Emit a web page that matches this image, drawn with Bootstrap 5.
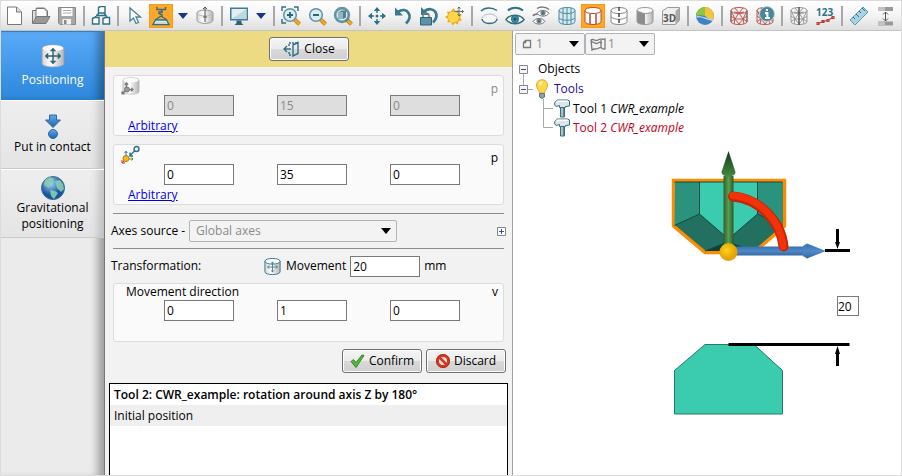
<!DOCTYPE html>
<html lang="en">
<head>
<meta charset="utf-8">
<meta name="viewport" content="width=device-width, initial-scale=1">
<title>Positioning</title>
<link href="https://cdn.jsdelivr.net/npm/bootstrap@5.3.0/dist/css/bootstrap.min.css" rel="stylesheet">
<style>
body{font:12px/18px "Open Sans","Noto Sans",sans-serif;color:#000;background:#fff}
.app{min-height:100vh;border:1px solid #dcdcdc}
svg{display:block;flex:none}
button{font:inherit;color:#000}
.toolbar{height:30px;padding-left:1px;background:linear-gradient(#fff,#f4f4f4 50%,#dedede);border-bottom:1px solid #c4c4c4;overflow:hidden}
.tool{width:24px;height:24px;margin:0 1px;padding:2px;border:0;background:none;flex:none}
.tool.active{background:#ffa726;box-shadow:inset 0 0 0 1px #f59a1b}
.divider{width:2px;height:20px;margin:0 3px;background:#a8a8a8;flex:none}
.drop{width:18px;height:24px;padding:0 4px;border:0;background:none;flex:none}
.t{fill:none;stroke:#2d7087;stroke-width:1.4}
.g{fill:none;stroke:#7a7a7a;stroke-width:1.3}
.r{fill:none;stroke:#bd3b30;stroke-width:1.1}
.sidebar{width:104px;flex:none;background:#ebebeb;border-right:1px solid #767676;box-shadow:inset -11px 0 9px -5px #00000055}
.side-tab{height:69px;border:0;border-bottom:1px solid #c9c9c9;border-top:1px solid #fff;background:linear-gradient(#f1f1f180,#dedede80);line-height:16px}
.side-tab.active{background:linear-gradient(#5aaaf7,#2c87db);color:#fff;border-color:#2f7fc8;box-shadow:inset -11px 0 9px -5px #00000055}
.work{width:408px;flex:none;background:#f2f2f2;border-right:1px solid #a0a0a0}
.banner{height:36px;background:#ecdb83}
.btn-win{width:80px;height:24px;gap:4px;border:1px solid #707070;border-radius:3px;background:linear-gradient(#f4f4f4,#ebebeb 50%,#dadada 50%,#cfcfcf);box-shadow:inset 0 0 0 1px #fcfcfc;padding:0}
.group{background:#fafafa;border:1px solid #dcdcdc;border-radius:3px;padding:0 5px 0 7px}
.group-head{height:19px}
.group-title{line-height:16px;padding-left:5px}
.fields{gap:43px;padding-left:43px}
.num{width:70px;height:21px;border:1px solid #7a7a7a;border-radius:0;padding:0 2px;background:#fff;color:#000;font:inherit}
.num:disabled{background:#dedede;color:#8a8a8a}
.muted{color:#8a8a8a}
.ref-link{color:#00e;padding-left:7px;line-height:19px}
.rule{height:1px;background:#8c8c8c}
.line-row{height:34px;margin:0 -2px}
.movement-row{display:grid;grid-template-columns:152px auto}
.actions{padding:7px 6px 0}
.pick{height:22px;border:1px solid #b0b4b8;border-radius:2px;background:#f3f3f3;padding:0 5px 0 6px}
.pick select{appearance:none;border:0;background:none;font:inherit;color:#8a8a8a;padding:0;min-width:0;outline:0;opacity:1}
.pick-axes{width:208px}
.pick-small{width:70px}
.picks{padding:2px 2px 0}
.log{border:1px solid #000;border-bottom:0;background:#fff;margin:10px 4px 0}
.log div{height:21px;line-height:21px;padding-left:4px}
.log .current{font-weight:600}
.log .alt{background:#efefef}
.tree-node{gap:3px}
.node-group{color:#1a0aa8}
.node-selected{color:#c8001a}
.scene{margin:8px 0 0 147px;width:240px}
.dim{position:absolute;left:177px;top:151px;width:22px;height:20px;padding:0}
</style>
</head>
<body>
<svg width="0" height="0" class="position-absolute" aria-hidden="true">
<defs>
<linearGradient id="metal"><stop offset="0" stop-color="#d5d5d5"/><stop offset=".4" stop-color="#fff"/><stop offset="1" stop-color="#b5b5b5"/></linearGradient>
<linearGradient id="arrowBlue" x2="0" y2="1"><stop offset="0" stop-color="#65a9e6"/><stop offset="1" stop-color="#1f62ad"/></linearGradient>
<linearGradient id="greenRod"><stop offset="0" stop-color="#2f5f2b"/><stop offset=".5" stop-color="#5a9e50"/><stop offset="1" stop-color="#2c5a29"/></linearGradient>
<linearGradient id="greenTip" x2="0" y2="1"><stop offset="0" stop-color="#16361a"/><stop offset="1" stop-color="#468a41"/></linearGradient>
<linearGradient id="blueRod" x2="0" y2="1"><stop offset="0" stop-color="#3b72ae"/><stop offset=".5" stop-color="#4d8ac8"/><stop offset="1" stop-color="#3568a4"/></linearGradient>
<radialGradient id="globe" cx=".4" cy=".3"><stop offset="0" stop-color="#a4d8f5"/><stop offset="1" stop-color="#17549c"/></radialGradient>
<radialGradient id="gold" cx=".4" cy=".4"><stop offset="0" stop-color="#ffd21c"/><stop offset="1" stop-color="#e3a305"/></radialGradient>
<symbol id="can" viewBox="0 0 20 20"><path d="M2 4.500v11c0 4 16 4 16 0v-11z" fill="url(#metal)"/><ellipse cx="10" cy="4.500" rx="8" ry="3" fill="#fafafa"/></symbol>
<symbol id="rim" viewBox="0 0 20 20"><path d="M2 4.500v11c0 4 16 4 16 0v-11M2 4.500c0 4 16 4 16 0s-16-4-16 0"/></symbol>
<symbol id="tub" viewBox="0 0 20 20"><path d="M1 3.500v13c1 3.500 17 3.500 18 0v-13c-1-3.500-17-3.500-18 0z" fill="url(#metal)" stroke="#aaa" stroke-width=".6"/><ellipse cx="10" cy="3.500" rx="8.500" ry="2.500" fill="#fbfbfb"/></symbol>
<symbol id="cross" viewBox="0 0 20 20"><path d="M10 1v18M1 10h18M7 4l3-3 3 3M7 16l3 3 3-3M4 7l-3 3 3 3M16 7l3 3-3 3"/></symbol>
<symbol id="eye" viewBox="0 0 20 12"><path d="M1 6.500C5 .8 15 .8 19 6.500C15 12 5 12 1 6.500z" fill="#fff" stroke-width="1.500"/><circle cx="10" cy="6" r="3.300" fill="#4a9ab4" stroke-width="1.300"/><circle cx="10" cy="6" r="1.300" fill="#123"/></symbol>
<symbol id="hammer" viewBox="0 0 16 19"><path d="M6.500 7.500h4V18h-4z" fill="#b4bfc2" stroke="#2d7087"/><path d="M9.500 8v10" stroke="#6d8188"/><path d="M.7 3.500L3.500 1h10l2 1v5l-4 .5v1h-6v-2L2 7.500.7 6z" fill="#dfe5e6" stroke="#2d7087"/><path d="M2.500 3.300L4 2.300h9.500" stroke="#fff" stroke-width="1.500" fill="none"/></symbol>
<symbol id="axes" viewBox="0 0 12 12"><path d="M5 7V1M5 7h6M5 7l-4 4M3.500 2.500L5 1l1.500 1.500M9.500 5.500L11 7 9.500 8.500M1 8.500V11h2.500" /></symbol>
<symbol id="mesh" viewBox="0 0 20 20"><path d="M2 4.500c0 4 16 4 16 0s-16-4-16 0v11c0 4 16 4 16 0v-11M2 4.500L6 13l4-6 4 6 4-8.500M6 13h8M6 13l-4 2.500M6 13l4 5 4-5 4 2.500M6 13l-1 5M14 13l1 5M6 2l4 5 4-5M2 10l4 3M18 10l-4 3M10 7l-5-1M10 7l5-1"/></symbol>
<symbol id="lens" viewBox="0 0 20 20"><path d="M13.500 13.500l5 4.800" stroke="#b97a10" stroke-width="4"/><path d="M13.500 13.500l5 4.800" stroke="#f5a623" stroke-width="2.600"/><circle cx="9" cy="9" r="6.300" fill="#dcebef" stroke="#5d95a5" stroke-width="1.500"/></symbol>
<symbol id="caret" viewBox="0 0 10 6"><path d="M0 0h10L5 6z"/></symbol>
</defs>
</svg>

<div class="app d-flex flex-column">
<header class="toolbar d-flex align-items-center" role="toolbar" aria-label="Main toolbar">
<button class="tool" aria-label="New"><svg width="20" height="20"><path d="M2.500 1h9l5 5v12.500h-14z" fill="#fff" stroke="#777"/><path d="M11.500 1v5h5" fill="#ddd" stroke="#777"/></svg></button>
<button class="tool" aria-label="Open"><svg width="20" height="20"><path d="M1.500 17V4.500h4V2h8l3 3v6" fill="#ddd" stroke="#777"/><path d="M5 2.500h8l3 3V12H5z" fill="#fff" stroke="#777"/><path d="M1.500 17.500l4-7H19l-4 7z" fill="#999" stroke="#777"/></svg></button>
<button class="tool" aria-label="Save"><svg width="20" height="20"><path d="M1.500 1.500h17v17H3l-1.500-1.500z" fill="#a6a6a6" stroke="#888"/><path d="M4.500 2h11v8h-11z" fill="#fff"/><path d="M6 4.500h8M6 7h8" stroke="#aaa"/><path d="M5.500 13h8.500v5.500H5.500z" fill="#f2f2f2"/><path d="M7 14h2.500v4H7z" fill="#888"/></svg></button>
<span class="divider"></span>
<button class="tool" aria-label="Structure"><svg width="20" height="20" class="t"><path d="M7.500 1.500l2-1h4.500v6.500H7.500zM1.500 12.500l2-1H8v6.500H1.500zM12 12.500l2-1h4.500v6.500H12z" fill="#fff"/><path d="M8 7l-4 4M13 7l3 4M5 9.500h9.500"/></svg></button>
<span class="divider"></span>
<button class="tool" aria-label="Select"><svg width="20" height="20"><path d="M5 2v13l3.500-3 2.500 5.500 2.500-1-2.500-5.500h4.500z" fill="#fff" stroke="#4a8395" stroke-width="1.300"/></svg></button>
<button class="tool active" aria-label="Position tools"><svg width="20" height="20" class="t"><path d="M6 .8v2.700h8.500V1M10.500 3.500v2M12 6H8v1.500l3 1v2"/><path d="M10 10l-6 4M10 10l6 4"/><path d="M4.500 14h11l2.500 4.500H2z" fill="#fff"/><path d="M5 15.500h10l1 2H4z" fill="#bcd9e0" stroke="none"/></svg></button>
<button class="drop" aria-label="Position tools options"><svg width="10" height="6" fill="#16368c"><use href="#caret"/></svg></button>
<button class="tool" aria-label="Part axis"><svg width="20" height="20"><path d="M2 7v7c0 4.500 16 4.500 16 0V7c0-4-16-4-16 0z" fill="url(#metal)" stroke="#999"/><path d="M2 7c0 4 16 4 16 0" fill="none" stroke="#bbb"/><path d="M10 1v15M8 3l2-2 2 2M8 11h4" stroke="#555" fill="none"/></svg></button>
<span class="divider"></span>
<button class="tool" aria-label="Display"><svg width="20" height="20"><path d="M1 1.500h18v13H1z" fill="#3d7d92"/><path d="M2.500 3h15v10h-15z" fill="#e2eff2"/><path d="M17.500 3v10h-15z" fill="#bcd7de"/><path d="M7.500 14.500h5V17l2 2h-9l2-2z" fill="#2f6274"/></svg></button>
<button class="drop" aria-label="Display options"><svg width="10" height="6" fill="#16368c"><use href="#caret"/></svg></button>
<span class="divider"></span>
<button class="tool" aria-label="Zoom window"><svg width="20" height="20"><use href="#lens"/><path d="M6 9h6M9 6v6" stroke="#26647a" stroke-width="1.800"/><path d="M1 5V1h4M13 1h4v4M1 13v4h4" class="t"/></svg></button>
<button class="tool" aria-label="Zoom out"><svg width="20" height="20"><use href="#lens"/><path d="M6 9h6" stroke="#26647a" stroke-width="2"/></svg></button>
<button class="tool" aria-label="Fit view"><svg width="20" height="20"><use href="#lens"/><circle cx="9" cy="9" r="7.500" class="t" opacity=".7"/><path d="M5.500 6l3-1.500h4.500v7L10 13H5.500z" fill="#58808c"/><path d="M5.500 6H10v7H5.500z" fill="#8fb5c0"/></svg></button>
<span class="divider"></span>
<button class="tool" aria-label="Pan"><svg width="20" height="20" fill="#2d7087"><path d="M10 1l3.200 4H6.800zM10 19l-3.200-4h6.400zM1 10l4-3.200v6.400zM19 10l-4 3.200V6.800z"/><path d="M9.300 5h1.400v2H9.300zM9.300 13h1.400v2H9.300zM5 9.300h2v1.400H5zM13 9.300h2v1.400h-2z"/><circle cx="10" cy="10" r="1.500"/></svg></button>
<button class="tool" aria-label="Undo view"><svg width="20" height="20"><path d="M5 6c9-6 16 4 8 11.500" fill="none" stroke="#387a90" stroke-width="2.800"/><path d="M2 1.500v8h8z" fill="#387a90"/></svg></button>
<button class="tool" aria-label="Lock rotation"><svg width="20" height="20"><path d="M5 5.500c10-7 17 4 9 11" fill="none" stroke="#387a90" stroke-width="2.800"/><path d="M2 1v8h8z" fill="#387a90"/><path d="M4 12V9.500c0-3 6-3 6 0V12" fill="none" stroke="#777" stroke-width="1.500"/><path d="M1.500 11.500h11V19h-11z" fill="#5c93a5" stroke="#2d6275"/></svg></button>
<button class="tool" aria-label="Light"><svg width="20" height="20"><path d="M8.500 2l1.800 3 3-1 .2 3.500 3.500 1-2 3 2 3-3.500.5-.5 3.500-3-1.500-2.500 2.500-1.500-3.500-3.500.5.500-3.500L0 11l3-2-1-3.500 3.500.3z" fill="#f2a71d"/><circle cx="8.500" cy="11" r="5.500" fill="#ffd84a"/><path d="M14 1v9M9.500 5.500h9M12.500 2.500L14 1l1.500 1.500M12.500 8.500L14 10l1.500-1.500M17 4l1.500 1.500L17 7" fill="none" stroke="#53707a"/></svg></button>
<span class="divider"></span>
<button class="tool" aria-label="Hide"><svg width="20" height="20"><path d="M2 5c4-4 11-4 16-.5" class="t" stroke-width="2"/><ellipse cx="10.500" cy="12.500" rx="7.500" ry="4.500" fill="#f6f6f6" stroke="#bbb"/><path d="M3 13c1 6 14 6 15 0" class="t"/></svg></button>
<button class="tool" aria-label="Show"><svg width="20" height="20" stroke="#2d7087"><path d="M3 4.500c4-4 11-3.500 15 0" fill="none" stroke-width="2"/><use href="#eye" y="7" width="20" height="12"/></svg></button>
<button class="tool" aria-label="Show all"><svg width="20" height="20" stroke="#777"><path d="M6 2.500c3-2 9-2 12 1M2 10c1-2 3-2 5-2" fill="none" stroke-width="1.500"/><use href="#eye" x="5" y="3" width="14" height="8"/><use href="#eye" x="1" y="11" width="14" height="8"/></svg></button>
<button class="tool" aria-label="Transparent edges"><svg width="20" height="20" stroke="#4b8ca0" fill="#d5eaf0"><use href="#rim"/><path d="M6 2v16M10 1.500v17M14 2v16M2 12c3 3 13 3 16 0" fill="none"/></svg></button>
<button class="tool active" aria-label="Wire edges"><svg width="20" height="20" stroke="#b94a33" fill="#fff"><use href="#rim"/><path d="M7 8v10M13 8v10" fill="none" stroke-width="1.500"/></svg></button>
<button class="tool" aria-label="Hidden edges"><svg width="20" height="20" stroke="#888" fill="#fff"><use href="#rim"/><path d="M2 11c4 3 12 3 16 0" fill="none"/><path d="M10 1v18" stroke="#444" stroke-width="1.500" stroke-dasharray="4 2"/></svg></button>
<button class="tool" aria-label="Shaded"><svg width="20" height="20"><use href="#can"/><path d="M2 4.500L10 7.500v11c-4 0-8-1-8-3z" fill="#8c8c8c"/><g fill="none" stroke="#999"><use href="#rim"/></g></svg></button>
<button class="tool" aria-label="3D view"><svg width="20" height="20"><path d="M1.500 5l5-3.500h12v13l-4 4h-13z" fill="#eee" stroke="#999"/><path d="M14.500 5l4-3.500v13l-4 4z" fill="#aaa"/><text x="2" y="16" font-size="10" font-weight="700" fill="#555">3D</text></svg></button>
<span class="divider"></span>
<button class="tool" aria-label="Chart"><svg width="20" height="20"><circle cx="10" cy="10" r="9" fill="#3d82c4"/><path d="M10 10V1a9 9 0 0 0-9 9c3-1 6-1 9 0z" fill="#8fc63d"/><path d="M10 10V1a9 9 0 0 1 8 13c-2 1-5-2-8-4z" fill="#f6c33c"/><path d="M1.500 11c5-2 10 3 16 3" fill="none" stroke="#b6dbf5" stroke-width="1.500"/></svg></button>
<span class="divider"></span>
<button class="tool" aria-label="Mesh"><svg width="20" height="20" fill="#eee"><g stroke="#c4564c"><use href="#mesh"/></g><path d="M2 5v11M18 5v11" stroke="#666"/></svg></button>
<button class="tool" aria-label="Mesh information"><svg width="20" height="20" fill="#eee"><g stroke="#b95a52"><use href="#mesh"/></g><circle cx="12" cy="8" r="7.500" fill="#4b8799" stroke="#bcd3da"/><path d="M10 7h2.500v4.500M10 12h5M12 3v2" stroke="#fff" stroke-width="1.800"/></svg></button>
<span class="divider"></span>
<button class="tool" aria-label="Half mesh"><svg width="20" height="20" fill="#f5f5f5"><g stroke="#999"><use href="#mesh"/></g><path d="M10 1v18" stroke="#555" stroke-width="1.500"/></svg></button>
<button class="tool" aria-label="Numbering"><svg width="20" height="20"><text x="1" y="10" font-size="10" font-weight="700" fill="#2d7087">123</text><path d="M3 17.500l5-2 4-1 6-3" class="r"/><path d="M2 16.500h2v2H2zM7 14.500h2v2H7zM12 13.500h2v2h-2zM17 10.500h2v2h-2z" class="r" fill="#fff"/></svg></button>
<span class="divider"></span>
<button class="tool" aria-label="Ruler"><svg width="20" height="20"><path d="M1 14L14 1l5 5L6 19z" fill="#a9d3e2" stroke="#5d9bb0"/><path d="M4 11l2 2M7 8l3 3M10 5l2 2M13 2l3 3" stroke="#2d7087"/></svg></button>
<button class="tool" aria-label="Distance"><svg width="20" height="20"><path d="M3 1h15v4H3zM3 15.500h15v4H3z" fill="#999"/><path d="M3 1h7v4H3zM3 15.500h7v4H3z" fill="#c2c2c2"/><path d="M10.500 6v9M8 8.500L10.500 6 13 8.500M8 12.500l2.500 2.500 2.500-2.500" fill="none" stroke="#555"/></svg></button>
</header>

<div class="d-flex flex-grow-1">
<nav class="sidebar d-flex flex-column" aria-label="Mode">
<button class="side-tab active d-flex flex-column align-items-center justify-content-center p-0"><svg width="24" height="24" class="mb-1"><use href="#tub" width="24" height="24"/><g fill="none" stroke="#276175" stroke-width="1.800"><use href="#cross" x="4" y="4" width="16" height="16"/></g></svg>Positioning</button>
<button class="side-tab d-flex flex-column align-items-center justify-content-center p-0"><svg width="24" height="25"><path d="M8.500 1h7v5h4L12 13.500 4.500 6h4z" fill="url(#arrowBlue)" stroke="#2f69a6"/><circle cx="12" cy="20" r="4.500" fill="url(#arrowBlue)" stroke="#2f69a6"/></svg>Put in contact</button>
<button class="side-tab d-flex flex-column align-items-center justify-content-center p-0"><svg width="24" height="24"><circle cx="12" cy="12" r="11.500" fill="url(#globe)" stroke="#3d7099"/><path d="M4 4l5-3 4 2-1 3-3 2-1 4-5-3zM14 5l5-1 3 4 1 5-3 3-4-4zM9 14l5 1 3 2-4 6-3-3z" fill="#86cdb2" opacity=".9"/></svg>Gravitational positioning</button>
</nav>

<main class="work d-flex flex-column">
<div class="banner d-flex align-items-center justify-content-center">
<button class="btn-win d-flex align-items-center justify-content-center"><svg width="18" height="16" class="t"><path d="M7 5V2h8M7 11v3h3" stroke-dasharray="2 1"/><path d="M11 4l5-2.500v11L11 15z"/><path d="M9 8H2M5 5L2 8l3 3"/></svg>Close</button>
</div>
<div class="px-2 pt-2 d-flex flex-column gap-2">
<section class="group">
<div class="group-head d-flex justify-content-between"><svg width="19" height="19"><use href="#tub" x="1" y="1" width="18" height="18"/><g class="g"><use href="#axes" y="6" width="13" height="13"/></g><circle cx="6" cy="13.500" r="2.500" fill="#999" stroke="#777"/></svg><span class="muted pt-1">p</span></div>
<div class="fields d-flex"><input class="num" aria-label="Origin X" value="0" disabled><input class="num" aria-label="Origin Y" value="15" disabled><input class="num" aria-label="Origin Z" value="0" disabled></div>
<a class="ref-link d-inline-block" href="#origin">Arbitrary</a>
</section>
<section class="group">
<div class="group-head d-flex justify-content-between"><svg width="19" height="19"><path d="M5 13V6M3.500 8L5 6.500 6.500 8" stroke="#2b6cb0" fill="none"/><path d="M5 14h7M10.500 12.500L12 14l-1.500 1.500" stroke="#3a9a3a" fill="none"/><path d="M5 14l-4 4M1 15v3h3" stroke="#d42b1b" fill="none"/><circle cx="5" cy="13.500" r="3" fill="#ffb81c" stroke="#b97a10"/><path d="M8.500 11l5-5M9 7.500V11h3" class="t"/><circle cx="15.500" cy="4" r="2.500" class="t"/></svg><span class="pt-1">p</span></div>
<div class="fields d-flex"><input class="num" aria-label="Target X" value="0"><input class="num" aria-label="Target Y" value="35"><input class="num" aria-label="Target Z" value="0"></div>
<a class="ref-link d-inline-block" href="#target">Arbitrary</a>
</section>
<div>
<div class="rule"></div>
<div class="line-row d-flex align-items-center"><label for="axes-source" class="me-1">Axes source -</label>
<div class="pick pick-axes d-flex align-items-center"><select id="axes-source" class="flex-grow-1" disabled><option>Global axes</option></select><svg width="10" height="6"><use href="#caret"/></svg></div>
<button class="ms-auto p-0 border-0 bg-transparent" aria-label="Expand"><svg width="9" height="9"><path d="M.5.5h8v8h-8z" fill="#fff" stroke="#888"/><path d="M2 4.500h5M4.500 2v5" stroke="#35539c"/></svg></button></div>
<div class="rule"></div>
<div class="line-row movement-row align-items-center">
<span>Transformation:</span>
<div class="d-flex align-items-center gap-1"><svg width="19" height="19"><use href="#can" width="19" height="19"/><g fill="none" stroke="#39768b"><use href="#rim" width="19" height="19"/><use href="#cross" x="4" y="4" width="11" height="12" stroke-width="1.500"/></g></svg><label for="distance">Movement</label><input id="distance" class="num" value="20"><span>mm</span></div>
</div>
<section class="group pb-3">
<div class="group-title d-flex justify-content-between"><span>Movement direction</span><span>v</span></div>
<div class="fields d-flex mb-1"><input class="num" aria-label="Direction X" value="0"><input class="num" aria-label="Direction Y" value="1"><input class="num" aria-label="Direction Z" value="0"></div>
</section>
</div>
</div>
<div class="actions d-flex justify-content-end gap-1">
<button class="btn-win d-flex align-items-center justify-content-center"><svg width="15" height="14"><path d="M1 7.500L3.500 5.500 6 8.500 12 1l2 .5L6 13.500z" fill="#55b83e" stroke="#2f8a26"/></svg>Confirm</button>
<button class="btn-win d-flex align-items-center justify-content-center"><svg width="14" height="14"><circle cx="7" cy="7" r="5.500" fill="#f7dcd8" stroke="#ce3a24" stroke-width="3"/><path d="M3 3l8 8" stroke="#ce3a24" stroke-width="2.500"/><circle cx="7" cy="7" r="6.600" fill="none" stroke="#9d2717" stroke-width=".7"/></svg>Discard</button>
</div>
<div class="log flex-grow-1"><div class="current">Tool 2: CWR_example: rotation around axis Z by 180°</div><div class="alt">Initial position</div></div>
</main>

<aside class="flex-grow-1 bg-white overflow-hidden">
<div class="picks d-flex">
<div class="pick pick-small d-flex align-items-center gap-1"><svg width="10" height="10" class="g"><path d="M1.500 3.500l2-2h5v7h-7zM1.500 3.500h2v-2"/></svg><select class="flex-grow-1" aria-label="Sheet"><option>1</option></select><svg width="10" height="6"><use href="#caret"/></svg></div>
<div class="pick pick-small d-flex align-items-center ps-1"><svg width="18" height="13" class="g" stroke-width="1"><path d="M1 2c3-2 4 2 7 0s4 0 7-1v10c-3 1-3-3-6-1s-5 0-7 2zM11 2v8M1 4c3-1 4 3 7 1s2 0 4 0"/></svg><select class="flex-grow-1" aria-label="Surface"><option>1</option></select><svg width="10" height="6"><use href="#caret"/></svg></div>
</div>
<div class="pt-1" role="tree" aria-label="Objects">
<div class="tree-node d-flex align-items-center" role="treeitem"><svg width="22" height="20"><path d="M10.500 14v6" stroke="#aaa"/><path d="M6.500 6.500h8v8h-8z" fill="#f5f5f5" stroke="#888"/><path d="M8 10.500h5" stroke="#35539c"/></svg>Objects</div>
<div class="tree-node d-flex align-items-center" role="treeitem"><svg width="38" height="20"><path d="M10.500 0v6M15 10.500h5" stroke="#aaa"/><path d="M6.500 6.500h8v8h-8z" fill="#f5f5f5" stroke="#888"/><path d="M8 10.500h5" stroke="#35539c"/><path d="M26.500 14c0-3-3-4-3-8 0-7 11-7 11 0 0 4-3 5-3 8z" fill="#ffd84a" stroke="#e0a92a"/><path d="M26 4c1-2 3-2 4-1l-3 4z" fill="#fff6bd"/><path d="M26.500 14.500h5V18l-2.500 1.500-2.500-1.500z" fill="#8aa0a8" stroke="#5f767f"/></svg><span class="node-group">Tools</span></div>
<div class="tree-node d-flex align-items-center" role="treeitem"><svg width="57" height="19"><path d="M30.500 0v19M30 9.500h10" stroke="#aaa" fill="none"/><use href="#hammer" x="41" width="16" height="19"/></svg><span>Tool 1 <i>CWR_example</i></span></div>
<div class="tree-node d-flex align-items-center" role="treeitem"><svg width="57" height="19"><path d="M30.500 0v9.500h9.500" stroke="#aaa" fill="none"/><use href="#hammer" x="41" width="16" height="19"/></svg><span class="node-selected">Tool 2 <i>CWR_example</i></span></div>
</div>
<div class="scene position-relative">
<svg width="240" height="275" viewBox="660 145 240 275" role="img" aria-label="Tool position view">
<path d="M673.500 180.500h111v45.500L754 252.500h-49L673.500 226z" fill="#217060" stroke="#ff8c00" stroke-width="3.500"/>
<path d="M675 182h24.500v32l-25 11.500zM783 182h-25.500v32l25 11.500z" fill="#2b927d"/>
<path d="M699.500 182h58v32l-29 25-29-25z" fill="#3bccb0"/>
<path d="M705 251l22-9 30 9z" fill="#0f3f38"/>
<path d="M699.500 182v32l29 25 29-25v-32M699.500 214l-25 11.500M757.500 214l25 11.500M705 251l23-9 24 9M674.500 182h108" fill="none" stroke="#0e4b42"/>
<path d="M735 246.500h69v9h-69z" fill="url(#blueRod)"/><path d="M803 246l4-2.500 19 7.500-19 7.500-4-2.500z" fill="url(#blueRod)"/>
<path d="M723.500 176h10v70h-10z" fill="url(#greenRod)"/><path d="M728.500 151l7 21c0 6-14 6-14 0z" fill="url(#greenTip)"/>
<path d="M733 196.500c26 2 48 25 50.500 50" fill="none" stroke="#c42408" stroke-width="10" stroke-linecap="round"/>
<path d="M733 195.500c26 2 48 25 50 51" fill="none" stroke="#f23209" stroke-width="7" stroke-linecap="round"/>
<circle cx="728.500" cy="252" r="9" fill="url(#gold)"/>
<path d="M825 250.500h25" stroke="#000" stroke-width="3"/>
<path d="M705 344.500h49l28.500 26v43.500h-108v-43.500z" fill="#3bccb0" stroke="#28796b"/>
<path d="M728.500 344.500h121" stroke="#000" stroke-width="3"/>
<path d="M836 229h3v13h1l-2.500 7-2.500-7h1zM836 366h3v-12h1l-2.500-8-2.500 8h1z"/>
</svg>
<input class="num dim" aria-label="Distance" value="20">
</div>
</aside>
</div>
</div>
<script src="https://cdn.jsdelivr.net/npm/bootstrap@5.3.0/dist/js/bootstrap.bundle.min.js"></script>
</body>
</html>
